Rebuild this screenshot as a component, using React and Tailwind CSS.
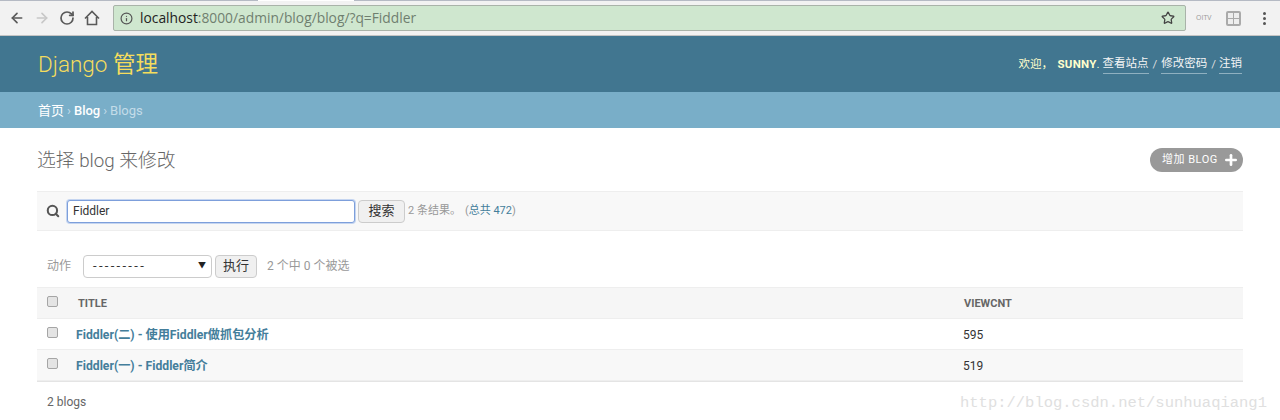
import { ArrowLeft, ArrowRight, RotateCw, Info, Star, Search, Plus } from "lucide-react";

const fontStack = "font-['Roboto','Noto_Sans_CJK_SC',sans-serif]";

const Browser = () => (
  <div className="h-9 bg-[#f2f2f2] border-b border-b-[#c4c4c4] font-['Open_Sans','Noto_Sans_CJK_SC',sans-serif]">
    <div className="h-[1px] flex bg-[#b5bac4]">
      <span className="ml-[258px] w-[96px] bg-white" />
    </div>
    <div className="h-[34px] flex items-center">
      <div className="w-[113px] shrink-0 flex items-center pl-[9px] gap-[9px]">
        <ArrowLeft className="w-[16px] h-[16px] text-[#5a5a5a]" strokeWidth={2.5} />
        <ArrowRight className="w-[16px] h-[16px] text-[#c8c8c8]" strokeWidth={2.5} />
        <RotateCw className="w-[16px] h-[16px] text-[#5a5a5a]" strokeWidth={2.6} />
        <svg viewBox="0 0 16 16" className="w-[16px] h-[16px] text-[#5a5a5a]" fill="none" stroke="currentColor" strokeWidth="1.6">
          <path d="M1 8.5 8 1.5l7 7M3.5 7v7.5h9V7" />
        </svg>
      </div>
      <div className="w-[1073px] h-[26px] bg-[#cfe7cf] border border-[#a9b3a9] rounded-[2px] flex items-center pl-[6px] pr-[10px]">
        <Info className="w-[13px] h-[13px] text-[#555] mr-[7px]" strokeWidth={2.2} />
        <span className="text-[13.8px] text-[#222]">localhost</span>
        <span className="text-[13.8px] text-[#6f7f6f]">:8000/admin/blog/blog/?q=Fiddler</span>
        <Star className="w-[14px] h-[14px] text-[#444] ml-auto" strokeWidth={2.2} />
      </div>
      <div className="flex-1 flex items-center pl-[10px]">
        <span className="text-[7px] text-[#999] w-[28px]">OITV</span>
        <div className="w-[15px] h-[15px] border-2 border-[#aaa] rounded-[2px] grid grid-cols-2 gap-[1px] bg-[#aaa] ml-[2px]">
          <span className="bg-[#eee]" />
          <span className="bg-[#eee]" />
          <span className="bg-[#eee]" />
          <span className="bg-[#eee]" />
        </div>
        <div className="flex flex-col gap-[2px] ml-[22px]">
          <span className="w-[3px] h-[3px] rounded-full bg-[#555]" />
          <span className="w-[3px] h-[3px] rounded-full bg-[#555]" />
          <span className="w-[3px] h-[3px] rounded-full bg-[#555]" />
        </div>
      </div>
    </div>
  </div>
);

const Header = () => (
  <div className="h-14 bg-[#417690] flex items-center justify-between pl-[38px] pr-[38px]">
    <div className="text-[22.5px] font-light text-[#f5dd5d] mt-[1px]">
      Django <span className="font-normal">管理</span>
    </div>
    <div className="text-[11.5px] text-[#ffc] flex items-center mt-[1px]">
      <span>欢迎，</span>
      <span className="font-bold ml-[4.5px] tracking-[0.2px]">SUNNY</span>
      <span>.</span>
      <a className="ml-[3px] text-[#f5f5f5] border-b border-[#8fb0c0]">查看站点</a>
      <span className="mx-[4px] text-[#ddd]">/</span>
      <a className="text-[#f5f5f5] border-b border-[#8fb0c0]">修改密码</a>
      <span className="ml-[4px] mr-[3px] text-[#ddd]">/</span>
      <a className="text-[#f5f5f5] border-b border-[#8fb0c0]">注销</a>
    </div>
  </div>
);

const Breadcrumbs = () => (
  <div className="h-9 bg-[#79aec8] flex items-center pl-[38px] pt-[1px] text-[13px] text-[#c4dce8]">
    <span className="text-white">首页</span>
    <span className="mx-[3px]">›</span>
    <span className="text-white font-medium">Blog</span>
    <span className="mx-[3px]">›</span>
    <span>Blogs</span>
  </div>
);

const Checkbox = () => (
  <span className="block w-[11px] h-[11px] rounded-[2px] border border-[#a5a5a5] bg-[#e4e4e4]" />
);

const Row = ({ title, count, odd }) => (
  <div className={`h-[31px] flex items-center pt-[2px] border-b border-[#eeeeee] ${odd ? "bg-[#f8f8f8]" : "bg-white"}`}>
    <div className="w-[39px] pl-[10px] -mt-[5px]">
      <Checkbox />
    </div>
    <a className="w-[887px] text-[12.2px] font-bold text-[#447e9b]">{title}</a>
    <span className="text-[12px] text-[#333]">{count}</span>
  </div>
);

const App = () => {
  return (
    <div className={`relative h-[420px] overflow-hidden bg-white ${fontStack}`}>
      <Browser />
      <Header />
      <Breadcrumbs />
      <div className="pl-[37px] pr-[37px]">
        <div className="flex items-center justify-between h-[63px]">
          <h1 className="text-[18.8px] font-light text-[#666] mt-[3px]">选择 blog 来修改</h1>
          <a className="h-[24px] w-[93px] rounded-full bg-[#999] text-white text-[11px] tracking-[0.5px] flex items-center pl-[12px]">
            <span className="mt-[1px]">增加 BLOG</span>
            <Plus className="w-[16px] h-[16px] ml-[5px]" strokeWidth={4} />
          </a>
        </div>

        <div className="h-[40px] bg-[#f8f8f8] border-y border-[#eeeeee] flex items-center pl-[9px]">
          <Search className="w-[14px] h-[14px] text-[#555] mr-[7px]" strokeWidth={3.5} />
          <div className="w-[288px] h-[23px] bg-white border border-[#7d9fdb] ring-1 ring-[#c5d5f0] rounded-[3px] flex items-center pl-[5px] text-[12px] text-[#333]">
            Fiddler
          </div>
          <button className="w-[47px] h-[23px] ml-[3px] rounded-[4px] border border-[#cccccc] bg-[#f0f0f0] text-[13px] text-[#333]">搜索</button>
          <span className="ml-[3px] text-[11px] text-[#999]">2 条结果。</span>
          <span className="ml-[4px] text-[11px] text-[#999]">
            (<span className="text-[#447e9b]">总共 472</span>)
          </span>
        </div>

        <div className="h-[56px] flex items-center pt-[14px] pl-[10px] text-[12px] text-[#999]">
          <span className="w-[36px]">动作</span>
          <div className="w-[129px] h-[23px] bg-white border border-[#cccccc] rounded-[4px] flex items-center justify-between pl-[9px] pr-[5px] text-[#333] text-[13px]">
            <span className="tracking-[2.3px]">---------</span>
            <span className="text-[8px] text-[#222]">▼</span>
          </div>
          <button className="w-[42px] h-[23px] ml-[3px] rounded-[4px] border border-[#cccccc] bg-[#f0f0f0] text-[13px] text-[#333]">执行</button>
          <span className="ml-[10px] text-[12px] text-[#999]">2 个中 0 个被选</span>
        </div>

        <div className="h-[32px] bg-[#f6f6f6] border-y border-[#eeeeee] flex items-center pt-[3px] text-[11px] font-bold text-[#666]">
          <div className="w-[41px] pl-[10px] -mt-[7px]">
            <Checkbox />
          </div>
          <span className="w-[886px]">TITLE</span>
          <span>VIEWCNT</span>
        </div>
        <Row title="Fiddler(二) - 使用Fiddler做抓包分析" count="595" />
        <Row title="Fiddler(一) - Fiddler简介" count="519" odd />
        <div className="h-[1px] bg-[#e4e4e4]" />

        <div className="pl-[10px] pt-[11px] text-[12px] text-[#666]">2 blogs</div>
      </div>

      <div className="absolute left-[960px] top-[392px] text-[15.5px] text-[#e0e0e0] font-['Liberation_Mono',monospace]">
        http://blog.csdn.net/sunhuaqiang1
      </div>
    </div>
  );
};

export default App;
